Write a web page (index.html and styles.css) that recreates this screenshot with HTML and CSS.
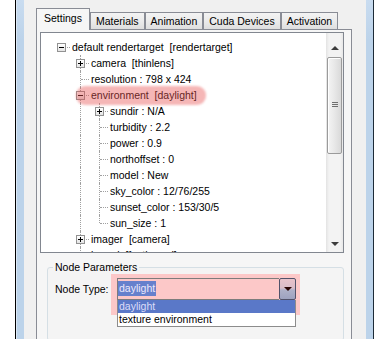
FILE: index.html
```html
<!DOCTYPE html>
<html lang="en">
<head>
  <meta charset="UTF-8" />
  <meta name="viewport" content="width=device-width, initial-scale=1.0" />
  <title>Render Settings</title>
  <link rel="stylesheet" href="styles.css">
</head>
<body>
  <div class="screen">
    <div class="desk"></div>
    <div class="window">
      <div class="frame frame-left"></div>
      <div class="client">
        <div class="tabs">
          <div class="tab active">Settings</div>
          <div class="tab">Materials</div>
          <div class="tab">Animation</div>
          <div class="tab">Cuda Devices</div>
          <div class="tab">Activation</div>
        </div>

        <div class="page">
          <div class="tree">
            <div class="tree-body">
              <div class="row"><i class="c root"><b class="box minus"></b></i><span class="lbl">default rendertarget  [rendertarget]</span></div>
              <div class="row"><i class="c"></i><i class="c tee"><b class="box plus"></b></i><span class="lbl">camera  [thinlens]</span></div>
              <div class="row"><i class="c"></i><i class="c tee"></i><span class="lbl">resolution : 798 x 424</span></div>
              <div class="row"><i class="c"></i><i class="c tee"><b class="box minus"></b></i><span class="lbl">environment  [daylight]</span></div>
              <div class="row"><i class="c"></i><i class="c pipe"></i><i class="c tee"><b class="box plus"></b></i><span class="lbl">sundir : N/A</span></div>
              <div class="row"><i class="c"></i><i class="c pipe"></i><i class="c tee"></i><span class="lbl">turbidity : 2.2</span></div>
              <div class="row"><i class="c"></i><i class="c pipe"></i><i class="c tee"></i><span class="lbl">power : 0.9</span></div>
              <div class="row"><i class="c"></i><i class="c pipe"></i><i class="c tee"></i><span class="lbl">northoffset : 0</span></div>
              <div class="row"><i class="c"></i><i class="c pipe"></i><i class="c tee"></i><span class="lbl">model : New</span></div>
              <div class="row"><i class="c"></i><i class="c pipe"></i><i class="c tee"></i><span class="lbl">sky_color : 12/76/255</span></div>
              <div class="row"><i class="c"></i><i class="c pipe"></i><i class="c tee"></i><span class="lbl">sunset_color : 153/30/5</span></div>
              <div class="row"><i class="c"></i><i class="c pipe"></i><i class="c ell"></i><span class="lbl">sun_size : 1</span></div>
              <div class="row"><i class="c"></i><i class="c tee"><b class="box plus"></b></i><span class="lbl">imager  [camera]</span></div>
              <div class="row"><i class="c"></i><i class="c tee"></i><span class="lbl">kernel  [fastkernel]</span></div>

              <div class="mark-env"></div>
            </div>

            <div class="vscroll">
              <div class="sb-btn sb-up"><span class="tri up"></span></div>
              <div class="sb-track">
                <div class="thumb"><span class="grip"></span></div>
              </div>
              <div class="sb-btn sb-down"><span class="tri down"></span></div>
            </div>
          </div>

          <fieldset class="group">
            <legend>Node Parameters</legend>
            <div class="field">
              <label for="node-type">Node Type:</label>
              <div class="combo">
                <div class="mark-combo"></div>
                <div class="combo-box" id="node-type">
                  <span class="combo-text"><span class="sel">daylight</span></span>
                  <span class="combo-btn"><span class="tri drop"></span></span>
                </div>
                <ul class="combo-list">
                  <li class="on">daylight</li>
                  <li>texture environment</li>
                </ul>
              </div>
            </div>
          </fieldset>
        </div>
      </div>
      <div class="frame frame-right"></div>
    </div>
    <div class="desk"></div>
  </div>
</body>
</html>
```

FILE: styles.css
```css
body {
  margin: 0;
  font-family: "Liberation Sans", Arial, sans-serif;
  font-size: 10.5px;
  color: #000;
  background: #fff;
}

.screen {
  display: flex;
  width: 387px;
  height: 339px;
  overflow: hidden;
}

.desk {
  width: 15px;
  background: #fff;
}

.desk:last-child {
  width: 13px;
}

.window {
  display: flex;
  border-left: 1px solid #000;
  border-right: 1px solid #1d2b37;
}

.frame {
  background: linear-gradient(#c9dcf0, #bcd3ea 40px, #bcd3ea);
}

.frame-left {
  width: 8px;
  box-shadow: inset 1px 0 0 #dce8f5;
}

.frame-right {
  width: 7px;
}

.client {
  width: 316px;
  padding: 9px 14px 0 12px;
  background: #f0f0f0;
  display: flex;
  flex-direction: column;
}

/* tab strip */
.tabs {
  display: flex;
  align-items: flex-end;
  height: 20px;
}

.tab {
  height: 16px;
  line-height: 16px;
  padding: 0 5px;
  border: 1px solid #898c95;
  border-bottom: none;
  background: linear-gradient(#f3f3f3, #ebebeb 50%, #dedede);
  white-space: nowrap;
}

.tab.active {
  position: relative;
  z-index: 1;
  height: 21px;
  line-height: 19px;
  padding: 0 7px;
  margin-bottom: -1px;
  background: #f6f6f6;
}

.page {
  flex: 1;
  padding: 2px 7px 0 3px;
  border: 1px solid #898c95;
  background: #f6f6f6;
}

/* tree view */
.tree {
  display: flex;
  height: 219px;
  border: 1px solid #828790;
  background: #fff;
}

.tree-body {
  position: relative;
  flex: 1;
  padding: 6px 0 0 11px;
  overflow: hidden;
}

.row {
  display: flex;
  height: 16px;
  line-height: 16px;
}

.lbl {
  white-space: pre;
  padding-left: 1px;
}

.c {
  position: relative;
  flex: none;
  width: 19px;
  height: 16px;
}

.tee::before,
.ell::before,
.pipe::before {
  content: "";
  position: absolute;
  left: 9px;
  top: 0;
  bottom: 0;
  border-left: 1px dotted #a0a0a0;
}

.ell::before {
  bottom: 8px;
}

.root::after,
.tee::after,
.ell::after {
  content: "";
  position: absolute;
  left: 10px;
  right: 1px;
  top: 8px;
  border-top: 1px dotted #a0a0a0;
}

.box {
  position: absolute;
  z-index: 1;
  left: 5px;
  top: 4px;
  width: 7px;
  height: 7px;
  border: 1px solid #929292;
  background: linear-gradient(#fff, #e4e4e4);
}

.box::before {
  content: "";
  position: absolute;
  left: 1px;
  right: 1px;
  top: 3px;
  height: 1px;
  background: #000;
}

.box.plus::after {
  content: "";
  position: absolute;
  left: 3px;
  top: 1px;
  bottom: 1px;
  width: 1px;
  background: #000;
}

.mark-env {
  position: absolute;
  z-index: 2;
  left: 35px;
  top: 53px;
  width: 130px;
  height: 19px;
  border-radius: 9px;
  background: rgba(230, 80, 80, 0.42);
  filter: blur(0.8px);
  pointer-events: none;
}

/* scroll bar */
.vscroll {
  display: flex;
  flex-direction: column;
  width: 17px;
  background: linear-gradient(to right, #e3e3e3, #f3f3f3 3px, #f3f3f3 14px, #e8e8e8);
}

.sb-btn {
  position: relative;
  height: 16px;
}

.sb-up {
  height: 24px;
}

.sb-track {
  flex: 1;
}

.thumb {
  position: relative;
  height: 95px;
  margin: 0 1px;
  border: 1px solid #9b9b9b;
  border-radius: 2px;
  background: linear-gradient(to right, #f4f4f4, #e9e9e9 45%, #d9d9d9);
  box-shadow: inset 1px 1px 0 #fff;
}

.grip {
  position: absolute;
  left: 4px;
  top: 44px;
  width: 6px;
  height: 5px;
  background: repeating-linear-gradient(#6e6e6e 0 1px, transparent 1px 2px);
}

.tri {
  position: absolute;
  left: 50%;
  width: 0;
  height: 0;
  margin-left: -4px;
  border-left: 4px solid transparent;
  border-right: 4px solid transparent;
}

.tri.up {
  top: 13px;
  border-bottom: 4px solid #3c3c3c;
}

.tri.down {
  top: 6px;
  border-top: 4px solid #3c3c3c;
}

/* node parameters */
.group {
  margin: 8px 0 0 7px;
  padding: 4px 7px 40px;
  border: 1px solid #d5dfe5;
  border-radius: 3px;
  background: #f4f4f4;
}

.group legend {
  padding: 0 2px;
  margin-left: -2px;
  line-height: 13px;
}

.field {
  display: flex;
  align-items: center;
  gap: 7px;
}

.field label {
  width: 55px;
  white-space: nowrap;
}

.combo {
  position: relative;
  width: 179px;
}

.mark-combo {
  position: absolute;
  left: -6px;
  top: -4px;
  width: 189px;
  height: 41px;
  background: #fcc8c8;
}

.combo-box {
  position: relative;
  z-index: 1;
  display: flex;
  height: 22px;
}

.combo-text {
  flex: 1;
  padding: 2px 0 0 0;
  border: 1px solid #7c7c7c;
  border-right: none;
}

.sel {
  display: inline-block;
  padding: 0 1px;
  line-height: 15px;
  background: #6680cc;
  color: #ece8fb;
}

.combo-btn {
  position: relative;
  width: 15px;
  border: 1px solid #51526a;
  border-radius: 2px;
  background: linear-gradient(#e8c2ca, #d9bcc8 45%, #aeb0c8 55%, #9da2bf);
}

.tri.drop {
  top: 8px;
  border-top: 4px solid #2a0505;
}

.combo-list {
  position: absolute;
  z-index: 2;
  top: 100%;
  left: 0;
  width: 177px;
  margin: 0;
  padding: 0;
  list-style: none;
  border: 1px solid #8c8c8c;
  border-top: none;
  background: #fff;
}

.combo-list li {
  height: 13px;
  line-height: 13px;
  padding-left: 1px;
  white-space: nowrap;
}

.combo-list li.on {
  height: 13px;
  background: #5a78c8;
  color: #dcdcf8;
}
```
